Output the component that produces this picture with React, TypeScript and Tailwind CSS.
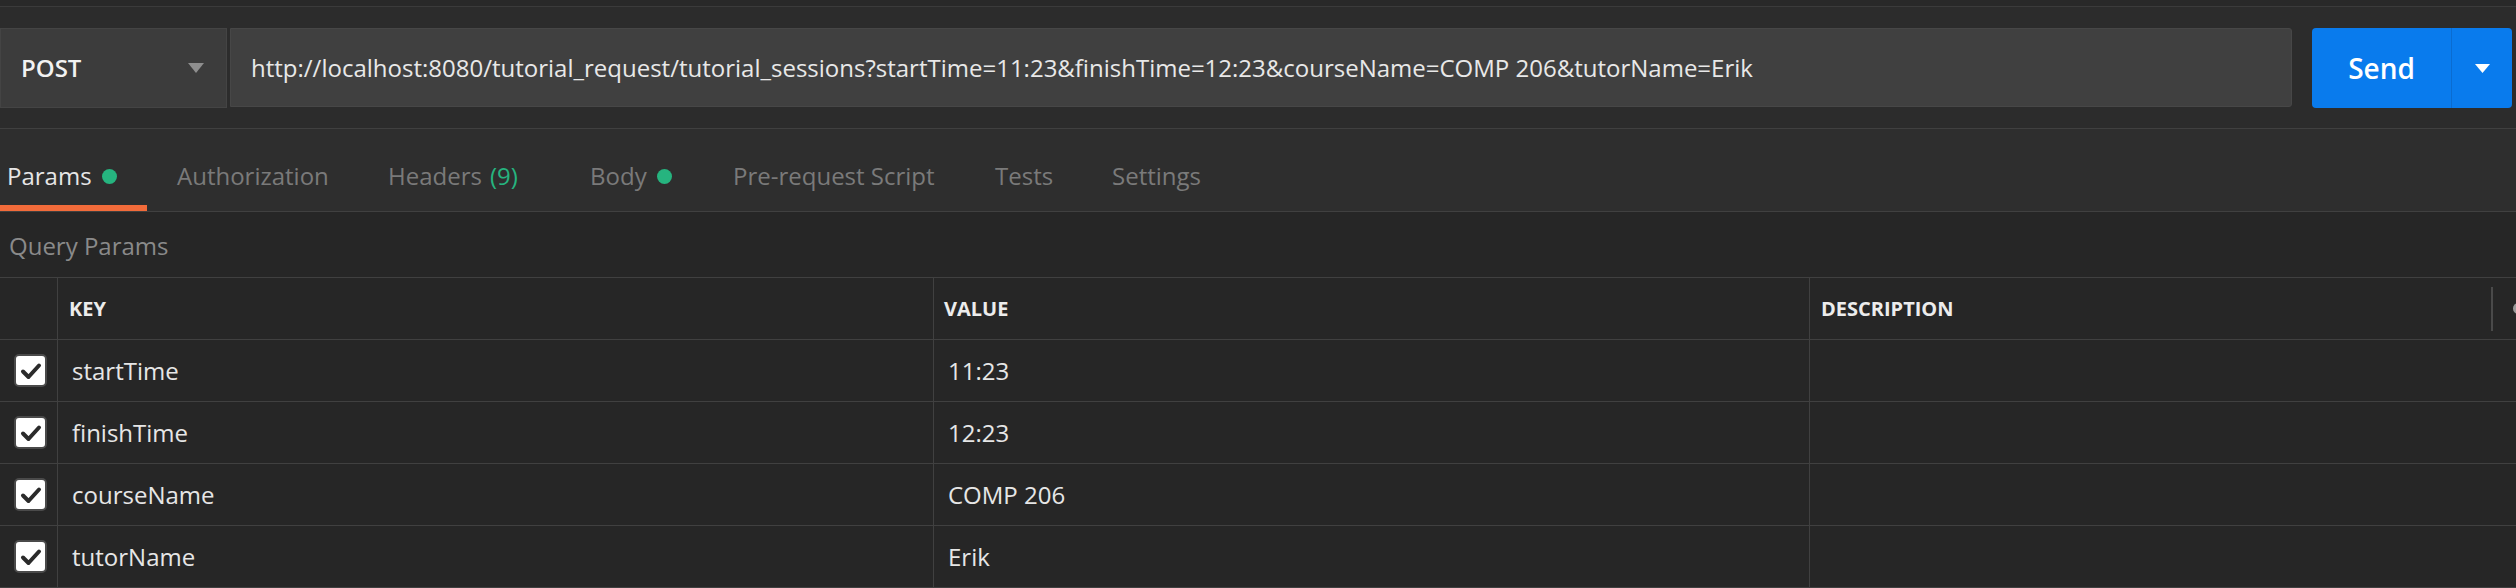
import React from "react";

const rows = [
  { key: "startTime", value: "11:23" },
  { key: "finishTime", value: "12:23" },
  { key: "courseName", value: "COMP 206" },
  { key: "tutorName", value: "Erik" },
];

function Check() {
  return (
    <div className="w-[33px] h-[33px] rounded-[5px] bg-white border-2 border-[#4a4a4a] flex items-center justify-center">
      <svg width="22" height="18" viewBox="0 0 22 18">
        <path d="M3 9.5 L8.5 15 L19 3.5" fill="none" stroke="#2b2b2b" strokeWidth="4" strokeLinecap="round" strokeLinejoin="round" />
      </svg>
    </div>
  );
}

export default function App() {
  return (
    <div className="w-[2516px] h-[588px] overflow-hidden bg-[#262626] font-['Open_Sans',sans-serif] text-[#e6e6e6]">
      <div className="h-[7px] bg-[#292929] border-b border-[#3b3b3b]" />
      <div className="h-[122px] bg-[#2c2c2c] border-b border-[#404040] flex items-start pt-[21px] pr-[4px]">
        <div className="w-[227px] h-[80px] bg-[#3c3c3c] border border-[#444444] flex items-center pl-[20px] pr-[22px]">
          <span className="text-[24px] font-semibold text-[#f2f2f2] flex-1">POST</span>
          <svg width="16" height="10" viewBox="0 0 16 10">
            <path d="M0 0 H16 L8 10 Z" fill="#8e8e8e" />
          </svg>
        </div>
        <div className="ml-[3px] flex-1 h-[79px] bg-[#404040] border border-[#474747] rounded-r-[3px] flex items-center pl-[20px]">
          <span className="text-[24px] text-[#e8e8e8] whitespace-nowrap">
            http://localhost:8080/tutorial_request/tutorial_sessions?startTime=11:23&amp;finishTime=12:23&amp;courseName=COMP 206&amp;tutorName=Erik
          </span>
        </div>
        <div className="ml-[20px] w-[200px] h-[80px] rounded-[4px] bg-[#097bed] flex">
          <div className="w-[139px] flex items-center justify-center text-[28px] font-semibold text-white">Send</div>
          <div className="w-[1px] bg-[#0a6cd0]" />
          <div className="flex-1 flex items-center justify-center">
            <svg width="15" height="9" viewBox="0 0 15 9">
              <path d="M0 0 H15 L7.5 9 Z" fill="#ffffff" />
            </svg>
          </div>
        </div>
      </div>
      <div className="h-[83px] bg-[#2e2e2e] border-b border-[#404040] flex text-[24px]">
        <div className="w-[147px] pl-[7px] flex items-center pt-[12px] shadow-[inset_0_-6px_0_#f26b3a] text-[#e6e6e6]">
          Params<span className="ml-[10px] w-[15px] h-[15px] rounded-full bg-[#26b47f]" />
        </div>
        <div className="w-[211px] pl-[30px] flex items-center pt-[12px] text-[#7a7a7a]">Authorization</div>
        <div className="w-[202px] pl-[30px] flex items-center pt-[12px] text-[#7a7a7a] whitespace-nowrap">
          Headers<span className="ml-[8px] text-[#26b47f]">(9)</span>
        </div>
        <div className="w-[143px] pl-[30px] flex items-center pt-[12px] text-[#7a7a7a]">
          Body<span className="ml-[10px] w-[15px] h-[15px] rounded-full bg-[#26b47f]" />
        </div>
        <div className="w-[262px] pl-[30px] flex items-center pt-[12px] text-[#7a7a7a] whitespace-nowrap">Pre-request Script</div>
        <div className="w-[117px] pl-[30px] flex items-center pt-[12px] text-[#7a7a7a]">Tests</div>
        <div className="w-[180px] pl-[30px] flex items-center pt-[12px] text-[#7a7a7a]">Settings</div>
      </div>
      <div className="h-[65px] flex items-center pl-[9px] pt-[2px] text-[24px] text-[#8a8a8a]">Query Params</div>
      <div className="border-t border-[#404040] grid grid-cols-[58px_876px_876px_1fr]">
        <div className="h-[62px] border-b border-r border-[#404040]" />
        <div className="h-[62px] border-b border-r border-[#404040] flex items-center pl-[11px] text-[20px] font-bold text-[#ececec]">KEY</div>
        <div className="h-[62px] border-b border-r border-[#404040] flex items-center pl-[10px] text-[20px] font-bold text-[#ececec]">VALUE</div>
        <div className="h-[62px] border-b border-[#404040] flex items-center pl-[11px] text-[20px] font-bold text-[#ececec]">
          <span className="flex-1">DESCRIPTION</span>
          <div className="w-[2px] h-[44px] bg-[#4a4a4a] mr-[20px]" />
          <div className="w-[11px] h-[11px] rounded-full bg-[#9a9a9a] mr-[-8px]" />
        </div>
        {rows.map((r) => (
          <React.Fragment key={r.key}>
            <div className="h-[62px] border-b border-r border-[#404040] flex items-center pl-[14px]">
              <Check />
            </div>
            <div className="h-[62px] border-b border-r border-[#404040] flex items-center pl-[14px] text-[24px] text-[#e6e6e6]">{r.key}</div>
            <div className="h-[62px] border-b border-r border-[#404040] flex items-center pl-[14px] text-[24px] text-[#e6e6e6]">{r.value}</div>
            <div className="h-[62px] border-b border-[#404040]" />
          </React.Fragment>
        ))}
      </div>
    </div>
  );
}
